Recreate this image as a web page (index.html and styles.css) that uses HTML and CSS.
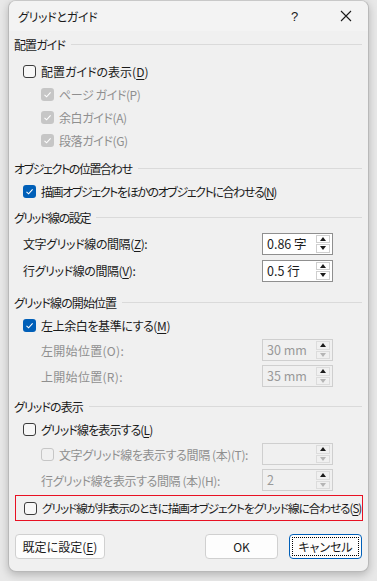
FILE: index.html
```html
<!DOCTYPE html>
<html lang="ja">
<head>
    <meta charset="UTF-8">
    <title>グリッドとガイド</title>
    <link rel="stylesheet" href="styles.css">
</head>
<body>

<div class="dialog">
    <div class="titlebar">
        <span class="title">グリッドとガイド</span>
        <span class="help">?</span>
        <svg class="close" width="12" height="12" viewBox="0 0 12 12"><path d="M1 1 L11 11 M11 1 L1 11" stroke="#1b1b1b" stroke-width="1.1" fill="none"/></svg>
    </div>

    <div class="content">
        <div class="section-head s1"><span class="t2">配置ガイド</span></div>
        <div class="row lv1"><span class="cb"></span><span>配置ガイドの表示(<u>D</u>)</span></div>
        <div class="row lv2 disabled"><span class="cb checked dis"><svg viewBox="0 0 13 13"><path d="M3.5 6.8 L5.6 8.8 L9.6 4.4"/></svg></span><span class="t1">ページ ガイド(P)</span></div>
        <div class="row lv2 disabled"><span class="cb checked dis"><svg viewBox="0 0 13 13"><path d="M3.5 6.8 L5.6 8.8 L9.6 4.4"/></svg></span><span class="t1">余白ガイド(A)</span></div>
        <div class="row lv2 disabled"><span class="cb checked dis"><svg viewBox="0 0 13 13"><path d="M3.5 6.8 L5.6 8.8 L9.6 4.4"/></svg></span><span class="t1">段落ガイド(G)</span></div>

        <div class="section-head s2"><span class="t3">オブジェクトの位置合わせ</span></div>
        <div class="row lv1"><span class="cb checked"><svg viewBox="0 0 13 13"><path d="M3.5 6.8 L5.6 8.8 L9.6 4.4"/></svg></span><span class="t3">描画オブジェクトをほかのオブジェクトに合わせる(<u>N</u>)</span></div>

        <div class="section-head s3"><span class="t3">グリッド線の設定</span></div>
        <div class="spin-row r27 lv1">
            <span class="t1">文字グリッド線の間隔(<u>Z</u>):</span>
            <div class="spin"><span class="spin-val">0.86 字</span><span class="spin-btns"><span class="sb"><i class="up"></i></span><span class="sb"><i class="down"></i></span></span></div>
        </div>
        <div class="spin-row r27 lv1">
            <span class="t1">行グリッド線の間隔(<u>V</u>):</span>
            <div class="spin"><span class="spin-val">0.5 行</span><span class="spin-btns"><span class="sb"><i class="up"></i></span><span class="sb"><i class="down"></i></span></span></div>
        </div>

        <div class="section-head s4"><span class="t2">グリッド線の開始位置</span></div>
        <div class="row lv1"><span class="cb checked"><svg viewBox="0 0 13 13"><path d="M3.5 6.8 L5.6 8.8 L9.6 4.4"/></svg></span><span class="t1">左上余白を基準にする(<u>M</u>)</span></div>
        <div class="spin-row r26 lv2 disabled">
            <span class="wide-text">左開始位置(O):</span>
            <div class="spin off"><span class="spin-val">30 mm</span><span class="spin-btns"><span class="sb"><i class="up"></i></span><span class="sb"><i class="down"></i></span></span></div>
        </div>
        <div class="spin-row r26 lv2 disabled">
            <span class="wide-text">上開始位置(R):</span>
            <div class="spin off"><span class="spin-val">35 mm</span><span class="spin-btns"><span class="sb"><i class="up"></i></span><span class="sb"><i class="down"></i></span></span></div>
        </div>

        <div class="section-head s5"><span class="t2">グリッドの表示</span></div>
        <div class="row lv1"><span class="cb"></span><span class="t2">グリッド線を表示する(<u>L</u>)</span></div>
        <div class="spin-row r26 lv2 disabled">
            <span class="with-cb"><span class="cb dis-empty"></span><span class="t1">文字グリッド線を表示する間隔 (本)(T):</span></span>
            <div class="spin off"><span class="spin-val"></span><span class="spin-btns"><span class="sb"><i class="up"></i></span><span class="sb"><i class="down"></i></span></span></div>
        </div>
        <div class="spin-row r26 lv2 disabled">
            <span class="t1">行グリッド線を表示する間隔 (本)(H):</span>
            <div class="spin off"><span class="spin-val">2</span><span class="spin-btns"><span class="sb"><i class="up"></i></span><span class="sb"><i class="down"></i></span></span></div>
        </div>

        <div class="highlight">
            <span class="cb"></span><span class="t4">グリッド線が非表示のときに描画オブジェクトをグリッド線に合わせる(<u>S</u>)</span>
        </div>

        <div class="buttons">
            <button class="btn wide">既定に設定(<u>E</u>)</button>
            <span class="spacer"></span>
            <button class="btn">OK</button>
            <button class="btn primary"><span class="focus">キャンセル</span></button>
        </div>
    </div>
</div>

</body>
</html>
```

FILE: styles.css
```css
/* Page */
body {
    margin: 0;
    background: #e8e8e8;
    font-family: 'Noto Sans CJK JP', 'Noto Sans', sans-serif;
    font-size: 12px;
    font-feature-settings: "palt";
    color: #1b1b1b;
    width: 377px;
    height: 581px;
    overflow: hidden;
}

/* Dialog window */
.dialog {
    margin-left: 8px;
    width: 361px;
    height: 572px;
    box-sizing: border-box;
    border: 1px solid #b9b9b9;
    border-top-color: #c8c8c8;
    border-radius: 8px;
    background: #f0f0f0;
    box-shadow: 0 3px 9px rgba(0, 0, 0, 0.22);
    overflow: hidden;
}

/* Title bar */
.titlebar {
    height: 30px;
    background: #f3f3f3;
    display: flex;
    align-items: center;
    padding-left: 9px;
}
.title {
    flex: 1;
    font-size: 12px;
    letter-spacing: -0.3px;
}
.help {
    font-family: 'Liberation Sans', sans-serif;
    font-size: 13px;
    width: 10px;
    margin-right: 39px;
}
.close {
    margin-right: 16px;
}

.t1 { letter-spacing: -0.4px; }
.t2 { letter-spacing: -0.9px; }
.t3 { letter-spacing: -1.4px; }
.t4 { letter-spacing: -1px; font-size: 11.6px; }
.wide-text { letter-spacing: 0.3px; }

/* Content */
.content {
    padding: 1px 6px 0 5px;
}

.section-head {
    display: flex;
    align-items: center;
    height: 24px;
    white-space: nowrap;
}
.section-head::after {
    content: "";
    flex: 1;
    height: 1px;
    background: #dadada;
    margin-left: 6px;
}
.s2 { margin-top: 4px; }
.s3 { margin-top: 2px; }
.s4 { margin-top: 6px; }
.s5 { margin-top: 5px; }

.row {
    display: flex;
    align-items: center;
    height: 23px;
    white-space: nowrap;
}
.s1 + .row { margin-top: 4px; }
.lv1 { padding-left: 9px; }
.lv2 { padding-left: 27px; }
.disabled { color: #8f8f8f; }

u {
    text-decoration: underline;
    text-underline-offset: 2px;
}

/* Checkbox */
.cb {
    width: 13px;
    height: 13px;
    box-sizing: border-box;
    border: 1px solid #3c3c3c;
    border-radius: 3px;
    background: #f7f7f7;
    margin-right: 5px;
    flex: none;
    display: inline-flex;
}
.cb svg {
    width: 13px;
    height: 13px;
}
.cb svg path {
    fill: none;
    stroke: #fff;
    stroke-width: 1.1;
}
.cb.checked {
    background: #005fb8;
    border: none;
}
.cb.checked.dis {
    background: #c6c6c6;
}
.cb.dis-empty {
    border-color: #c6c6c6;
    background: #f0f0f0;
}

/* Spin rows */
.spin-row {
    display: flex;
    align-items: center;
    justify-content: space-between;
    padding-right: 29px;
    white-space: nowrap;
}
.r27 { height: 27px; }
.r26 { height: 26px; }
.s3 + .r27 { margin-top: 1px; }
.with-cb {
    display: flex;
    align-items: center;
}

.spin {
    display: flex;
    width: 71px;
    height: 22px;
    box-sizing: border-box;
    border: 1px solid #8f8f8f;
    background: #fff;
    color: #1b1b1b;
}
.spin.off {
    border-color: #cfcfcf;
    background: #f0f0f0;
    color: #999;
}
.spin-val {
    flex: 1;
    padding-left: 4px;
    line-height: 20px;
    font-size: 12.5px;
}
.spin-btns {
    width: 14px;
    display: flex;
    flex-direction: column;
    gap: 1px;
    padding: 1px 2px 1px 0;
}
.sb {
    flex: 1;
    border: 1px solid #cfcfcf;
    background: #fff;
    display: flex;
    align-items: center;
    justify-content: center;
}
.spin.off .sb {
    background: #f0f0f0;
    border-color: #dcdcdc;
}
.up {
    width: 0;
    height: 0;
    border-left: 3px solid transparent;
    border-right: 3px solid transparent;
    border-bottom: 4px solid #1b1b1b;
}
.down {
    width: 0;
    height: 0;
    border-left: 3px solid transparent;
    border-right: 3px solid transparent;
    border-top: 4px solid #1b1b1b;
}
.spin.off .down {
    border-top-color: #b5b5b5;
}

/* Red highlight */
.highlight {
    display: flex;
    align-items: center;
    height: 26px;
    box-sizing: border-box;
    margin: 2px 0 0 1px;
    width: 348px;
    border: 1px solid #e81123;
    padding-left: 8px;
    white-space: nowrap;
}

/* Buttons */
.buttons {
    display: flex;
    margin-top: 13px;
    padding-left: 1px;
    gap: 11px;
}
.spacer {
    flex: 1;
}
.btn {
    width: 73px;
    height: 25px;
    background: #fdfdfd;
    border: 1px solid #d0d0d0;
    border-radius: 4px;
    font-family: inherit;
    font-size: 12px;
    font-feature-settings: "palt";
    color: #1b1b1b;
    padding: 0;
}
.btn.wide {
    width: 90px;
}
.btn.primary {
    border-color: #005fb8;
    padding: 2px;
}
.focus {
    display: flex;
    align-items: center;
    justify-content: center;
    height: 100%;
    box-sizing: border-box;
    border: 1px dotted #000;
}
```
